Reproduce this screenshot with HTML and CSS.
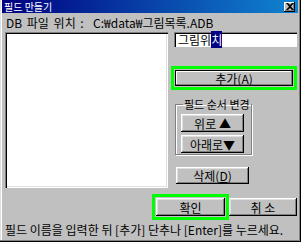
FILE: index.html
```html
<!DOCTYPE html>
<html>
<head>
  <meta charset="utf-8">
  <link rel="stylesheet" href="styles.css">
</head>
<body>
  <div class="window">
    <div class="titlebar">
      <span class="title">필드 만들기</span>
      <span class="close">
        <svg width="8" height="7" viewBox="0 0 8 7"><path d="M0 0h2l2 2 2-2h2L5 3.5 8 7H6L4 5 2 7H0l3-3.5z" fill="#000"/></svg>
      </span>
    </div>
    <div class="path">DB 파일 위치 :&nbsp; C:₩data₩그림목록.ADB</div>
    <div class="main">
      <div class="listbox"></div>
      <div class="side">
        <div class="field">그림위<span class="sel">치</span></div>
        <div class="focus focus_add">
          <div class="btn btn_default">추가(<u>A</u>)</div>
        </div>
        <fieldset class="group">
          <legend>필드 순서 변경</legend>
          <div class="btn btn_move">위로 ▲</div>
          <div class="btn btn_move">아래로▼</div>
        </fieldset>
        <div class="btn btn_delete">삭제(<u>D</u>)</div>
      </div>
    </div>
    <div class="bottom">
      <div class="focus focus_ok">
        <div class="btn btn_ok">확인</div>
      </div>
      <div class="btn btn_cancel">취 소</div>
    </div>
    <div class="status">필드 이름을 입력한 뒤 [추가] 단추나 [Enter]를 누르세요.</div>
  </div>
</body>
</html>
```
FILE: styles.css
```css
body {
  margin: 0;
  font-family: "Noto Sans CJK KR", "Liberation Sans", sans-serif;
  font-size: 12px;
  color: #000;
}
.window {
  box-sizing: border-box;
  width: 301px;
  height: 242px;
  padding: 0 3px 3px 2px;
  background: #c0c0c0;
  box-shadow: inset -1px -1px #000, inset -2px -2px #808080, inset 1px 0 #dfdfdf, inset 2px 0 #fff;
  overflow: hidden;
}
.titlebar {
  display: flex;
  align-items: center;
  justify-content: space-between;
  height: 13px;
  padding: 0 3px 0 2px;
  background: linear-gradient(to right, #000080, #1084d0);
  color: #fff;
}
.title {
  font-size: 10px;
  line-height: 13px;
}
.close {
  display: flex;
  align-items: center;
  justify-content: center;
  box-sizing: border-box;
  width: 11px;
  height: 10px;
  background: #c0c0c0;
  box-shadow: inset -1px -1px #000, inset 1px 1px #fff, inset -2px -2px #808080;
}
.path {
  margin-top: 3px;
  height: 13px;
  line-height: 13px;
  padding-left: 4px;
  word-spacing: 2px;
  white-space: nowrap;
}
.main {
  display: flex;
  margin-top: 3px;
  padding-left: 3px;
}
.listbox {
  box-sizing: border-box;
  width: 163px;
  height: 156px;
  background: #fff;
  box-shadow: inset 1px 1px #808080, inset 2px 2px #000, inset -1px -1px #fff, inset -2px -2px #dfdfdf;
}
.side {
  display: flex;
  flex-direction: column;
  width: 126px;
  margin-left: 3px;
}
.field {
  box-sizing: border-box;
  height: 15px;
  margin-left: 3px;
  padding: 0 3px 0 4px;
  line-height: 15px;
  background: #fff;
  box-shadow: inset 1px 1px #808080, inset 2px 2px #000, inset -1px -1px #fff;
}
.sel {
  background: #000080;
  color: #fff;
}
.btn {
  box-sizing: border-box;
  display: flex;
  align-items: center;
  justify-content: center;
  background: #c0c0c0;
  box-shadow: inset -1px -1px #000, inset 1px 1px #fff, inset -2px -2px #808080, inset 2px 2px #dfdfdf;
  white-space: nowrap;
}
.focus {
  box-sizing: border-box;
  border: 3px solid #00ff00;
  padding: 1px;
}
.focus_add {
  margin-top: 19px;
  height: 24px;
}
.btn_default {
  height: 16px;
  box-shadow: inset 0 0 0 1px #000, inset -2px -2px #808080, inset 1px 1px #000, inset 2px 2px #fff;
}
.group {
  box-sizing: border-box;
  width: 77px;
  height: 57px;
  margin: 8px 0 0 4px;
  padding: 4px 0 0 5px;
  border: 1px solid #808080;
  box-shadow: 1px 1px 0 #fff, inset 1px 1px 0 #fff;
}
.group legend {
  padding: 0 1px;
  margin-left: 2px;
  font-size: 11px;
  line-height: 12px;
}
.btn_move {
  width: 63px;
  height: 18px;
  margin-bottom: 3px;
}
.btn_delete {
  width: 73px;
  height: 17px;
  margin: 12px 0 0 5px;
}
.bottom {
  display: flex;
  align-items: center;
  justify-content: flex-end;
  margin-top: 6px;
  padding-right: 1px;
}
.focus_ok {
  width: 77px;
  height: 26px;
}
.btn_ok {
  height: 18px;
}
.btn_cancel {
  width: 68px;
  height: 18px;
}
.status {
  margin-top: 3px;
  padding-left: 3px;
  height: 13px;
  line-height: 13px;
  white-space: nowrap;
}
```
